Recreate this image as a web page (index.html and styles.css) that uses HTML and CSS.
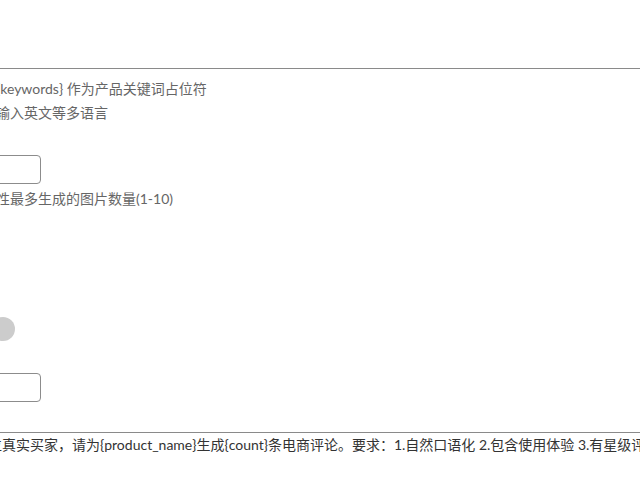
FILE: index.html
```html
<!DOCTYPE html>
<html lang="zh-CN">
<head>
<meta charset="utf-8">
<title>表单</title>
<link rel="stylesheet" href="styles.css">
</head>
<body>
<div class="form">
  <div class="textarea top-area"></div>
  <div class="help">提示：用{keywords} 作为产品关键词占位符</div>
  <div class="help">支持中文输入英文等多语言</div>

  <div class="input first-input"></div>
  <div class="help after-input">商品一次性最多生成的图片数量(1-10)</div>

  <div class="switch"><span class="knob"></span></div>

  <div class="input second-input"></div>

  <div class="textarea bottom-area">你是一位真实买家，请为{product_name}生成{count}条电商评论。要求：1.自然口语化 2.包含使用体验 3.有星级评分 4.长度适中</div>
</div>
</body>
</html>
```

FILE: styles.css
```css
html, body {
  margin: 0;
  padding: 0;
  background: #ffffff;
  overflow: hidden;
}

body {
  width: 640px;
  height: 494px;
  font-family: Lato, "Noto Sans CJK SC", sans-serif;
  font-size: 14px;
}

.form {
  margin-left: -60px;
  width: 760px;
  display: flex;
  flex-direction: column;
  align-items: flex-start;
}

.textarea {
  box-sizing: border-box;
  width: 760px;
  border: 1px solid #8a8a8a;
  border-radius: 3px;
}

.top-area {
  margin-top: -30px;
  height: 99px;
}

.help {
  color: #666666;
  line-height: 24px;
  white-space: nowrap;
}

.top-area + .help {
  margin-top: 8px;
}

.input {
  box-sizing: border-box;
  width: 101px;
  height: 29px;
  border: 1px solid #8c8c8c;
  border-radius: 4px;
}

.first-input {
  margin-top: 30px;
}

.after-input {
  margin-top: 3px;
}

.switch {
  margin-top: 106px;
  margin-left: 51px;
  display: flex;
}

.knob {
  width: 24px;
  height: 24px;
  border-radius: 50%;
  background: #cccccc;
}

.second-input {
  margin-top: 32px;
}

.bottom-area {
  margin-top: 30px;
  height: 120px;
  padding: 1px 5px;
  color: #333333;
  line-height: 22px;
  white-space: nowrap;
  overflow: hidden;
}
```
